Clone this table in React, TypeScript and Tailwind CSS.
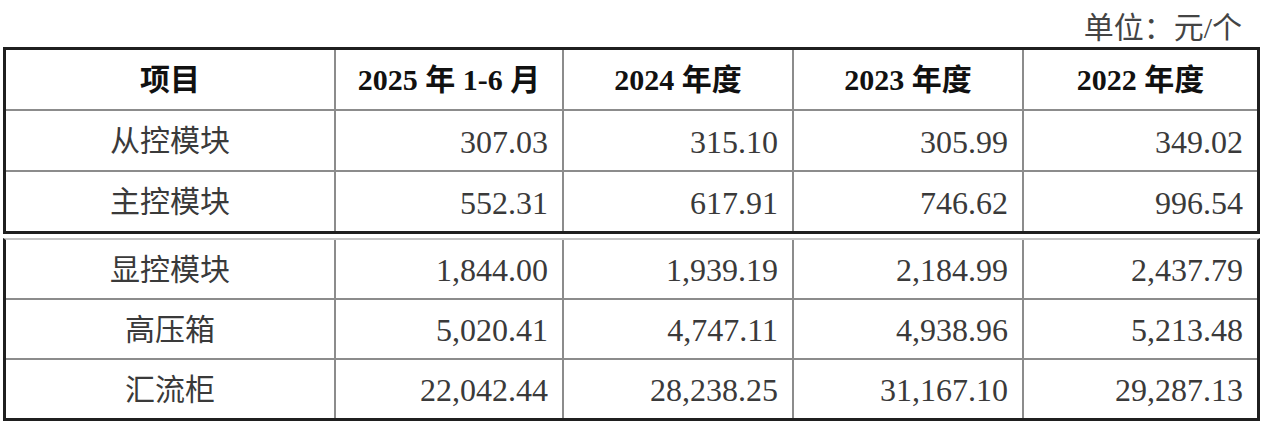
import React from "react";

const headers = ["项目", "2025 年 1-6 月", "2024 年度", "2023 年度", "2022 年度"];

// 两张表（截图拼接处中间有一条空隙）
const tableOne = [
  ["从控模块", "307.03", "315.10", "305.99", "349.02"],
  ["主控模块", "552.31", "617.91", "746.62", "996.54"],
];

const tableTwo = [
  ["显控模块", "1,844.00", "1,939.19", "2,184.99", "2,437.79"],
  ["高压箱", "5,020.41", "4,747.11", "4,938.96", "5,213.48"],
  ["汇流柜", "22,042.44", "28,238.25", "31,167.10", "29,287.13"],
];

const cols = "grid grid-cols-[328px_228px_230px_230px_1fr]";
const font = "font-['Liberation_Serif','Noto_Sans_CJK_SC',serif]";

const Row = ({ cells, h, top }: { cells: string[]; h: string; top: boolean }) => (
  <div className={`${cols} ${h} ${top ? "border-t-2 border-[#8c8c8c]" : ""}`}>
    {cells.map((c, i) => (
      <div
        key={i}
        className={`flex items-center text-[#3a3a3a] ${
          i === 0
            ? "justify-center text-[30px]"
            : "justify-end pr-[14px] text-[32px] pt-[2px] border-l-2 border-[#8c8c8c]"
        }`}
      >
        {c}
      </div>
    ))}
  </div>
);

export default function App() {
  return (
    <div className={`w-[1269px] h-[429px] bg-white ${font}`}>
      <div className="h-[47px] flex items-end justify-end pr-[27px] pb-[4px] text-[30px] leading-none text-[#444]">
        单位：元/个
      </div>

      {/* 表一 */}
      <div className="ml-[3px] w-[1257px] border-[3px] border-[#1f1f1f]">
        <div className={`${cols} h-[59px]`}>
          {headers.map((t, i) => (
            <div
              key={i}
              className={`flex items-center justify-center text-[30px] font-bold text-[#111] ${
                i > 0 ? "border-l-2 border-[#8c8c8c]" : ""
              }`}
            >
              {t}
            </div>
          ))}
        </div>
        {tableOne.map((r, i) => (
          <Row key={i} cells={r} h="h-[61px]" top />
        ))}
      </div>

      {/* 表二 */}
      <div className="ml-[3px] mt-[4px] w-[1257px] border-[3px] border-t-2 border-[#1f1f1f] border-t-[#c4c4c4]">
        {tableTwo.map((r, i) => (
          <Row key={i} cells={r} h={i === 0 ? "h-[58px]" : "h-[60px]"} top={i > 0} />
        ))}
      </div>
    </div>
  );
}
